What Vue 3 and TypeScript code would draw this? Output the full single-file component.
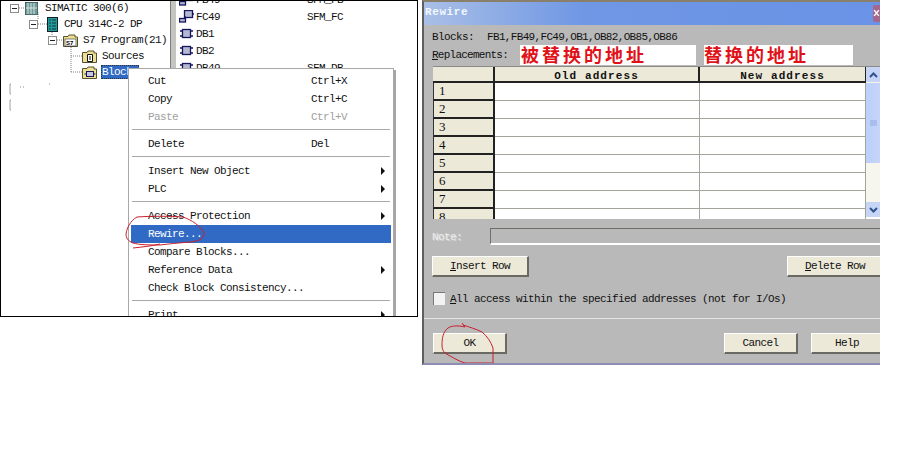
<template>
  <div class="desktop">
    <section class="explorer">
      <div class="tree">
        <svg class="tree-lines" width="170" height="120" viewBox="0 0 170 120">
          <path
            d="M19 8H25M38 12V20M38 24H47M52 28V36M57 40H63M71 47V72M71 56H82M71 72H82"
            fill="none"
            stroke="#808080"
            stroke-dasharray="1 1"
          />
          <path d="M11 84H10V94H11M11 100H10V110H11" fill="none" stroke="#a0a0a0" />
          <path d="M20 87H26M49 84H51" fill="none" stroke="#909090" stroke-dasharray="1 2" />
        </svg>
        <div v-for="node in treeNodes" :key="node.label" class="tree-row" :class="`level-${node.level}`">
          <span v-if="node.level < 3" class="expander"></span>
          <svg v-if="node.icon === 'rack'" class="node-icon" width="13" height="13" viewBox="0 0 13 13">
            <rect width="13" height="13" fill="#6f9a98" stroke="#20403f" />
            <path d="M3 1V12M6 1V12M9 1V12M1 6H12" stroke="#d8e4e2" />
          </svg>
          <svg v-else-if="node.icon === 'cpu'" class="node-icon" width="11" height="15" viewBox="0 0 11 15">
            <rect x=".5" y=".5" width="10" height="14" fill="#239a96" stroke="#10202a" />
            <path d="M3 2V13M6 2V13M8 2V13" stroke="#0c3a40" stroke-dasharray="2 1" />
          </svg>
          <svg v-else class="node-icon" width="15" height="13" viewBox="0 0 15 13">
            <path d="M.5 12.5V2.5H5L6 1H12V3H14.500V12.500Z" fill="#ecdf94" stroke="#55502f" />
            <rect v-if="node.icon === 's7'" x="2" y="5" width="11" height="7" fill="#fff" stroke="#333" stroke-width=".6" />
            <text v-if="node.icon === 's7'" x="3" y="11" class="s7-text">S7</text>
            <path v-if="node.icon === 'source'" d="M5.500 4.500H10.500V11.500H5.500Z" fill="#fff" stroke="#111" />
            <path v-if="node.icon === 'source'" d="M7 7H9M7 9H9" stroke="#111" />
            <rect v-if="node.icon === 'blocks'" x="4.500" y="5.500" width="7" height="5" fill="#c8c8dc" stroke="#17175c" />
            <path v-if="node.icon === 'blocks'" d="M2.500 8H4.500M11.500 8H13.500" stroke="#17175c" />
          </svg>
          <span class="node-label" :class="{ selected: node.selected }">{{ node.label }}</span>
        </div>
      </div>

      <div class="splitter"></div>

      <div class="block-list">
        <div v-for="block in blocks" :key="block.name" class="block-row">
          <svg v-if="block.kind === 'fc'" width="15" height="13" viewBox="0 0 15 13">
            <rect x="5.500" y=".5" width="8" height="7" fill="#b4b8d0" stroke="#15155e" stroke-width="1.300" />
            <rect x=".5" y="8.500" width="6" height="3.500" fill="#b4b8d0" stroke="#15155e" stroke-width="1.300" />
            <path d="M6 6V8M13 4H15" stroke="#15155e" stroke-width="1.300" />
          </svg>
          <svg v-else width="15" height="13" viewBox="0 0 15 13">
            <rect x="3.500" y="2.500" width="8" height="8" fill="#b4b8d0" stroke="#15155e" stroke-width="1.300" />
            <path d="M1 4H3.500M1 9H3.500M11.500 4H14M11.500 9H14" stroke="#15155e" stroke-width="1.500" />
          </svg>
          <span class="block-name">{{ block.name }}</span>
          <span class="block-symbol">{{ block.symbol }}</span>
        </div>
      </div>

      <div class="context-menu">
        <template v-for="(item, index) in menuItems" :key="index">
          <div v-if="item.separator" class="menu-separator"></div>
          <div v-else class="menu-item" :class="{ active: item.active, disabled: item.disabled }">
            <span class="menu-text">{{ item.label }}</span>
            <span class="menu-shortcut">{{ item.shortcut }}</span>
            <span v-if="item.submenu" class="menu-arrow"></span>
          </div>
        </template>
      </div>

      <svg class="scribble" width="90" height="40" viewBox="126 214 90 40">
        <path
          d="M137 217C150 216 170 216 183 217C192 220 200 226 204 232C205 238 200 241 190 242C178 243 168 244 160 245C150 245 140 245 133 243C128 241 126 238 126 234C127 228 130 221 137 217M133 248C142 247 152 246 160 244"
          fill="none"
          stroke="#c8202c"
        />
      </svg>
    </section>

    <section class="dialog">
      <header class="titlebar">
        <span class="title">Rewire</span>
        <span class="close-btn">
          <svg width="12" height="16" viewBox="0 0 12 16">
            <path d="M2 3L10 13M10 3L2 13" stroke="#fff" stroke-width="2.500" />
          </svg>
        </span>
      </header>

      <div class="dialog-body">
        <div class="info-row">
          <span class="info-label">Blocks:</span>
          <span class="info-value">FB1,FB49,FC49,OB1,OB82,OB85,OB86</span>
        </div>

        <div class="replace-row">
          <span class="replace-label"><u>R</u>eplacements:</span>
          <span class="hint hint-old">被替换的地址</span>
          <span class="hint hint-new">替换的地址</span>
        </div>

        <div class="grid-wrap">
          <div class="grid">
            <div class="head corner"></div>
            <div class="head">Old address</div>
            <div class="head head-new">New address</div>
            <template v-for="row in rows" :key="row">
              <div class="row-head">{{ row }}</div>
              <div class="cell"></div>
              <div class="cell"></div>
            </template>
          </div>
          <div class="scrollbar">
            <span class="scroll-btn">
              <svg width="9" height="6" viewBox="0 0 9 6"><path d="M1 5L4.500 1.500L8 5" fill="none" stroke="#33518f" stroke-width="2" /></svg>
            </span>
            <span class="scroll-thumb">
              <svg width="7" height="7" viewBox="0 0 7 7"><path d="M0 1H7M0 3H7M0 5H7" stroke="#8fa8e0" /></svg>
            </span>
            <span class="scroll-track"></span>
            <span class="scroll-btn">
              <svg width="9" height="6" viewBox="0 0 9 6"><path d="M1 1L4.500 4.500L8 1" fill="none" stroke="#33518f" stroke-width="2" /></svg>
            </span>
          </div>
        </div>

        <div class="note-row">
          <span class="note-label">Note:</span>
          <span class="note-input"></span>
        </div>

        <div class="row-buttons">
          <button class="btn btn-row"><u>I</u>nsert Row</button>
          <button class="btn btn-row"><u>D</u>elete Row</button>
        </div>

        <label class="check-row">
          <span class="checkbox"></span>
          <span><u>A</u>ll access within the specified addresses (not for I/Os)</span>
        </label>
      </div>

      <div class="dialog-footer">
        <button class="btn btn-ok">OK</button>
        <button class="btn btn-cancel">Cancel</button>
        <button class="btn btn-help">Help</button>
      </div>

      <svg class="scribble scribble-ok" width="60" height="46" viewBox="436 322 60 46">
        <path
          d="M460 323L463 327C455 325 449 326 446 328C441 332 440 338 440 345C440 349 441 351 443 353C450 357 456 361 463 363H491V348C489 342 485 336 480 332C474 329 467 327 461 325"
          fill="none"
          stroke="#c8202c"
        />
      </svg>
    </section>
  </div>
</template>

<script setup lang="ts">
interface TreeNode {
  label: string
  level: number
  icon: 'rack' | 'cpu' | 's7' | 'source' | 'blocks'
  selected?: boolean
}

interface BlockItem {
  name: string
  symbol: string
  kind: 'fc' | 'db'
}

interface MenuItem {
  label?: string
  shortcut?: string
  submenu?: boolean
  disabled?: boolean
  active?: boolean
  separator?: boolean
}

const treeNodes: TreeNode[] = [
  { label: 'SIMATIC 300(6)', level: 0, icon: 'rack' },
  { label: 'CPU 314C-2 DP', level: 1, icon: 'cpu' },
  { label: 'S7 Program(21)', level: 2, icon: 's7' },
  { label: 'Sources', level: 3, icon: 'source' },
  { label: 'Blocks', level: 3, icon: 'blocks', selected: true }
]

const blocks: BlockItem[] = [
  { name: 'FB49', symbol: 'SFM_FB', kind: 'fc' },
  { name: 'FC49', symbol: 'SFM_FC', kind: 'fc' },
  { name: 'DB1', symbol: '', kind: 'db' },
  { name: 'DB2', symbol: '', kind: 'db' },
  { name: 'DB49', symbol: 'SFM_DB', kind: 'db' }
]

const menuItems: MenuItem[] = [
  { label: 'Cut', shortcut: 'Ctrl+X' },
  { label: 'Copy', shortcut: 'Ctrl+C' },
  { label: 'Paste', shortcut: 'Ctrl+V', disabled: true },
  { separator: true },
  { label: 'Delete', shortcut: 'Del' },
  { separator: true },
  { label: 'Insert New Object', submenu: true },
  { label: 'PLC', submenu: true },
  { separator: true },
  { label: 'Access Protection', submenu: true },
  { label: 'Rewire...', active: true },
  { label: 'Compare Blocks...' },
  { label: 'Reference Data', submenu: true },
  { label: 'Check Block Consistency...' },
  { separator: true },
  { label: 'Print', submenu: true }
]

const rows = [1, 2, 3, 4, 5, 6, 7, 8]
</script>

<style>
html,
body {
  background: #fff;
}
</style>

<style scoped>
.desktop {
  position: relative;
  width: 921px;
  height: 460px;
  overflow: hidden;
  background: #fff;
  color: #111;
  font-family: "Liberation Mono", "Noto Sans CJK SC", monospace;
  font-size: 11px;
  letter-spacing: -0.6px;
}

/* left window */
.explorer {
  position: relative;
  display: flex;
  box-sizing: border-box;
  width: 418px;
  height: 317px;
  overflow: hidden;
  border: 1px solid #000;
}

.tree {
  position: relative;
  flex: none;
  width: 169px;
  margin-top: -1px;
}

.tree-lines {
  position: absolute;
  top: 0;
  left: -1px;
}

.tree-row {
  position: relative;
  display: flex;
  align-items: center;
  height: 16px;
  white-space: nowrap;
}

.level-0 { padding-left: 9px; }
.level-1 { padding-left: 28px; }
.level-2 { padding-left: 47px; }
.level-3 { padding-left: 81px; }

.expander {
  position: relative;
  flex: none;
  box-sizing: border-box;
  width: 9px;
  height: 9px;
  border: 1px solid #8c8c8c;
  background: #fff;
}

.expander::after {
  content: '';
  position: absolute;
  top: 3px;
  left: 1px;
  width: 5px;
  height: 1px;
  background: #222;
}

.node-icon {
  flex: none;
  margin-left: 6px;
  background: #fff;
}

.level-1 .node-icon { margin-left: 9px; }
.level-3 .node-icon { margin-left: 0; }

.node-label {
  margin-left: 6px;
  padding: 1px;
}

.level-1 .node-label { margin-left: 5px; }
.level-2 .node-label { margin-left: 4px; }
.level-3 .node-label { margin-left: 4px; }

.s7-text {
  font-family: "Liberation Sans", sans-serif;
  font-size: 6px;
  font-weight: 700;
  letter-spacing: 0;
}

.selected {
  outline: 1px dotted #333;
  outline-offset: -1px;
  background: #316ac5;
  color: #fff;
}

.splitter {
  flex: none;
  box-sizing: border-box;
  width: 6px;
  border-left: 1px solid #808080;
  background: #c4c4c0;
}

.block-list {
  flex: 1;
  margin-top: -10px;
  padding-left: 3px;
}

.block-row {
  display: flex;
  align-items: center;
  height: 17px;
  white-space: nowrap;
}

.block-name {
  width: 111px;
  margin-left: 2px;
}

/* context menu */
.context-menu {
  position: absolute;
  top: 67px;
  left: 127px;
  box-sizing: border-box;
  width: 266px;
  padding: 3px 2px;
  border: 1px solid #a8a8a8;
  background: #fff;
  box-shadow: 2px 2px 0 #a6a6a6;
}

.menu-item {
  position: relative;
  display: flex;
  align-items: center;
  height: 18px;
  padding-left: 17px;
  white-space: nowrap;
}

.menu-text {
  width: 163px;
}

.menu-item.active {
  background: #316ac5;
  color: #fff;
}

.menu-item.disabled {
  color: #a0a0a0;
}

.menu-arrow {
  position: absolute;
  top: 5px;
  right: 6px;
  border-top: 4px solid transparent;
  border-bottom: 4px solid transparent;
  border-left: 4px solid #111;
}

.menu-separator {
  height: 1px;
  margin: 3px 1px 5px;
  background: #a8a8a8;
}

.scribble {
  position: absolute;
  top: 213px;
  left: 125px;
  overflow: visible;
}

/* dialog */
.dialog {
  position: absolute;
  top: 0;
  left: 422px;
  box-sizing: border-box;
  width: 458px;
  height: 365px;
  overflow: hidden;
  border-top: 2px solid #8a7f6a;
  border-left: 2px solid #5e5e5e;
  border-bottom: 2px solid #8d8db4;
  background: #b9b9b9;
}

.titlebar {
  display: flex;
  align-items: center;
  justify-content: space-between;
  height: 23px;
  background: linear-gradient(90deg, #a9bfe6 0%, #6f97e4 35%, #6a92e6 100%);
}

.title {
  padding: 0 0 3px 1px;
  color: #f4f8ff;
  font-weight: 700;
  letter-spacing: 0.6px;
}

.close-btn {
  display: flex;
  width: 7px;
  height: 17px;
  overflow: hidden;
  border-radius: 2px 0 0 2px;
  background: #a5688c;
}

.dialog-body {
  width: 452px;
  padding: 5px 0 0 8px;
}

.info-row {
  display: flex;
  gap: 13px;
  align-items: center;
  height: 14px;
}

.info-value {
  letter-spacing: -0.66px;
}

.replace-row {
  display: flex;
  align-items: center;
  height: 20px;
  margin-top: 1px;
}

.replace-label {
  width: 88px;
  letter-spacing: -0.75px;
}

.hint {
  box-sizing: border-box;
  height: 20px;
  background: #fff;
  color: #e01218;
  font-family: "Noto Sans CJK SC", sans-serif;
  font-size: 18px;
  font-weight: 700;
  line-height: 18px;
  letter-spacing: 3px;
}

.hint-old {
  width: 176px;
  padding-left: 1px;
}

.hint-new {
  width: 149px;
  margin-left: 8px;
}

.grid-wrap {
  display: flex;
  width: 447px;
  height: 152px;
  margin-top: 1px;
  margin-left: 1px;
  overflow: hidden;
  border-top: 1px solid #8a8a8a;
  background: #fff;
}

.grid {
  display: grid;
  flex: none;
  grid-template-columns: 62px 205px 166px;
  grid-auto-rows: 18px;
  align-content: start;
  width: 433px;
  background: #fff;
}

.head,
.row-head {
  box-sizing: border-box;
  border-right: 2px solid #222;
  border-bottom: 2px solid #222;
  background: #ece9d8;
}

.head {
  height: 16px;
  padding-top: 3px;
  font-weight: 700;
  text-align: center;
  letter-spacing: 1.100px;
  line-height: 12px;
}

.head-new {
  border-right-width: 1px;
}

.row-head {
  height: 18px;
  margin-top: -2px;
  margin-bottom: 2px;
  padding-left: 5px;
  border-left: 1px solid #333;
  font-family: "Liberation Serif", serif;
  font-size: 13px;
  letter-spacing: 0;
  line-height: 16px;
}

.cell {
  box-sizing: border-box;
  height: 18px;
  margin-top: -2px;
  margin-bottom: 2px;
  border-right: 1px solid #a4a498;
  border-bottom: 1px solid #a4a498;
}

.scrollbar {
  display: flex;
  flex: none;
  flex-direction: column;
  width: 14px;
  height: 150px;
  background: #f6f5ee;
}

.scroll-btn {
  display: flex;
  flex: none;
  align-items: center;
  justify-content: center;
  height: 15px;
  background: #c6d4f6;
}

.scroll-thumb {
  display: flex;
  flex: none;
  align-items: center;
  justify-content: center;
  height: 80px;
  margin-top: 1px;
  background: linear-gradient(90deg, #bcd0fa, #c6d4f8);
}

.scroll-track {
  flex: 1;
}

.note-row {
  display: flex;
  align-items: center;
  margin-top: 9px;
}

.note-label {
  width: 58px;
  color: #ececec;
  text-shadow: 1px 1px 0 #d5d5d5;
}

.note-input {
  flex: 1;
  box-sizing: border-box;
  height: 17px;
  border-top: 1px solid #6f6f6a;
  border-left: 1px solid #6f6f6a;
  border-bottom: 2px solid #fff;
  background: #b9b9b9;
}

.row-buttons {
  display: flex;
  justify-content: space-between;
  margin-top: 11px;
}

.btn {
  box-sizing: border-box;
  padding: 0;
  border: 0;
  border-top: 1px solid #fff;
  border-left: 1px solid #fff;
  border-right: 2px solid #6a6a62;
  border-bottom: 2px solid #6a6a62;
  background: #ece9d8;
  color: #111;
  font: inherit;
  letter-spacing: inherit;
}

.btn-row {
  width: 97px;
  height: 21px;
}

.check-row {
  display: flex;
  align-items: center;
  gap: 5px;
  margin-top: 15px;
  padding-left: 1px;
}

.checkbox {
  box-sizing: border-box;
  width: 12px;
  height: 13px;
  border-top: 1px solid #777;
  border-left: 1px solid #777;
  background: #f2f2f2;
}

.dialog-footer {
  display: flex;
  width: 454px;
  margin-top: 13px;
  padding: 14px 0 0 9px;
  border-top: 1px solid #e4e4e4;
}

.btn-ok {
  width: 74px;
  height: 21px;
}

.btn-cancel {
  width: 74px;
  height: 21px;
  margin-left: 217px;
}

.btn-help {
  width: 73px;
  height: 21px;
  margin-left: 13px;
}

.scribble-ok {
  top: 320px;
  left: 14px;
}
</style>
